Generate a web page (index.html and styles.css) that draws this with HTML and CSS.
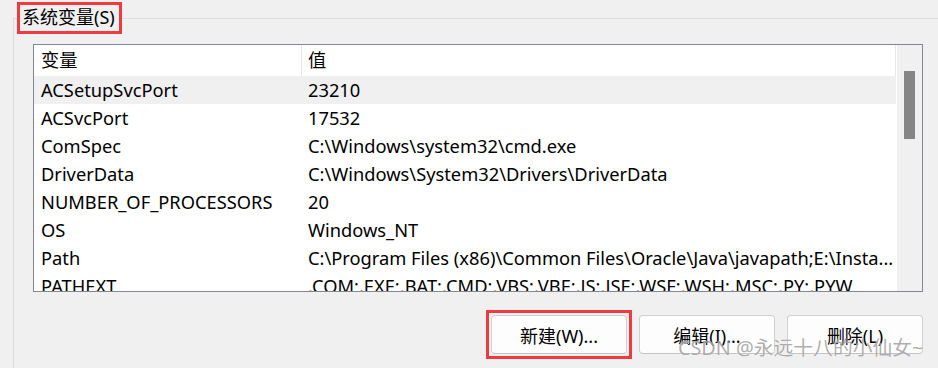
FILE: index.html
```html
<!DOCTYPE html>
<html lang="zh-CN">
<head>
  <meta charset="UTF-8" />
  <title>系统变量</title>
  <link rel="stylesheet" href="styles.css">
</head>
<body>
  <fieldset class="group">
    <legend class="group-title">系统变量(S)</legend>

    <div class="list-box">
      <div class="list-table">
        <div class="list-head">
          <div class="col-name">变量</div>
          <div class="col-value">值</div>
        </div>
        <div class="list-row selected"><div class="col-name">ACSetupSvcPort</div><div class="col-value">23210</div></div>
        <div class="list-row"><div class="col-name">ACSvcPort</div><div class="col-value">17532</div></div>
        <div class="list-row"><div class="col-name">ComSpec</div><div class="col-value">C:\Windows\system32\cmd.exe</div></div>
        <div class="list-row"><div class="col-name">DriverData</div><div class="col-value">C:\Windows\System32\Drivers\DriverData</div></div>
        <div class="list-row"><div class="col-name">NUMBER_OF_PROCESSORS</div><div class="col-value">20</div></div>
        <div class="list-row"><div class="col-name">OS</div><div class="col-value">Windows_NT</div></div>
        <div class="list-row"><div class="col-name">Path</div><div class="col-value">C:\Program Files (x86)\Common Files\Oracle\Java\javapath;E:\Insta...</div></div>
        <div class="list-row"><div class="col-name">PATHEXT</div><div class="col-value">.COM;.EXE;.BAT;.CMD;.VBS;.VBE;.JS;.JSE;.WSF;.WSH;.MSC;.PY;.PYW</div></div>
      </div>
      <div class="scrollbar">
        <div class="scroll-thumb"></div>
      </div>
    </div>

    <div class="button-group">
      <span class="marked"><button>新建(W)...</button></span>
      <button>编辑(I)...</button>
      <button>删除(L)</button>
    </div>
  </fieldset>

  <div class="watermark">CSDN @永远十八的小仙女~</div>
</body>
</html>
```

FILE: styles.css
```css
:root {
  --bg: #f0f0f0;
  --line: #dcdcdc;
  --frame: #828790;
  --mark: #f03a3f;
  --text: #000;
}

* { box-sizing: border-box; }
body {
  margin: 0;
  width: 938px;
  height: 368px;
  overflow: hidden;
  background-color: var(--bg);
  color: var(--text);
  font-family: "Noto Sans", "Noto Sans CJK SC", sans-serif;
  font-size: 18.3px;
  position: relative;
}

/* group box */
.group {
  margin: 2px 0 0 13px;
  padding: 0 0 0 3px;
  min-width: 0;
  height: 366px;
  border: 1px solid var(--line);
  border-right: none;
  border-bottom: none;
}
.group-title {
  padding: 0 4px 0 2px;
  height: 32px;
  line-height: 25px;
  border: 3px solid var(--mark);
  font-size: 18px;
}

/* list view */
.list-box {
  display: flex;
  margin: 10px 0 0 16px;
  width: 890px;
  height: 248px;
  border: 1px solid var(--frame);
  background-color: white;
  overflow: hidden;
}
.list-table {
  width: 862px;
  flex: none;
}
.list-head, .list-row {
  display: flex;
  white-space: nowrap;
}
.list-head {
  height: 31px;
  line-height: 30px;
  border-right: 1px solid #e8e8e8;
}
.list-row {
  height: 28px;
  line-height: 28px;
}
.list-row.selected { background-color: var(--bg); }
.col-name {
  width: 267px;
  flex: none;
  padding-left: 7px;
  overflow: hidden;
}
.col-value {
  flex: 1;
  padding-left: 6px;
  overflow: hidden;
}
.list-head .col-value { border-left: 1px solid #e5e5e5; }
.list-row .col-value { margin-left: 1px; }

.scrollbar {
  flex: 1;
  margin-left: 1px;
  background-color: var(--bg);
  padding: 26px 0 0 7px;
}
.scroll-thumb {
  width: 11px;
  height: 68px;
  background-color: #858585;
}

/* buttons */
.button-group {
  display: flex;
  align-items: center;
  gap: 12px;
  margin: 18px 0 0 474px;
}
button {
  width: 136px;
  height: 39px;
  padding: 0;
  border: 1px solid #d0d0d0;
  border-bottom-color: #c4c4c4;
  border-radius: 4px;
  background-color: #fdfdfd;
  color: var(--text);
  font-family: inherit;
  font-size: 18px;
}
.marked {
  display: flex;
  margin: 0 -5px;
  padding: 2px;
  border: 3px solid var(--mark);
}

.watermark {
  position: absolute;
  left: 678px;
  top: 332px;
  font-size: 19.8px;
  white-space: nowrap;
  color: rgba(120, 120, 120, 0.6);
  text-shadow: 0 0 1px rgba(255, 255, 255, 0.8);
}
```
